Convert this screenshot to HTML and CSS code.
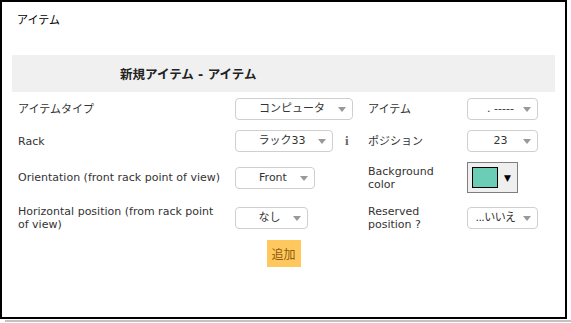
FILE: index.html
```html
<!DOCTYPE html>
<html lang="ja">
<head>
    <meta charset="UTF-8">
    <meta name="viewport" content="width=device-width, initial-scale=1.0">
    <title>アイテム</title>
    <link rel="stylesheet" href="styles.css">
</head>
<body>

    <div class="shot">
        <div class="frame">
            <h1 class="page-title">アイテム</h1>

            <div class="band">
                <h2 class="band-title">新規アイテム - アイテム</h2>
            </div>

            <!-- New item form -->
            <div class="form-grid">
                <div class="label">アイテムタイプ</div>
                <div class="field">
                    <div class="dropdown w-118">コンピュータ<span class="caret"></span></div>
                </div>
                <div class="label">アイテム</div>
                <div class="field">
                    <div class="dropdown w-71">. -----<span class="caret"></span></div>
                </div>

                <div class="label">Rack</div>
                <div class="field">
                    <div class="dropdown w-98">ラック33<span class="caret"></span></div>
                    <span class="info">i</span>
                </div>
                <div class="label">ポジション</div>
                <div class="field">
                    <div class="dropdown w-71">23<span class="caret"></span></div>
                </div>

                <div class="label">Orientation (front rack point of view)</div>
                <div class="field">
                    <div class="dropdown w-80">Front<span class="caret"></span></div>
                </div>
                <div class="label label-narrow">Background color</div>
                <div class="field">
                    <div class="color-picker">
                        <span class="swatch"></span>
                        <span class="picker-arrow">▼</span>
                    </div>
                </div>

                <div class="label">Horizontal position (from rack point of view)</div>
                <div class="field">
                    <div class="dropdown w-73">なし<span class="caret"></span></div>
                </div>
                <div class="label label-narrow">Reserved position ?</div>
                <div class="field">
                    <div class="dropdown w-71 tight">...いいえ<span class="caret"></span></div>
                </div>
            </div>

            <div class="actions">
                <button class="btn-add" type="submit">追加</button>
            </div>
        </div>
        <div class="shade"></div>
    </div>

</body>
</html>
```

FILE: styles.css
```css
/* General Styles */
body {
    margin: 0;
    background: #fff;
    font-family: "DejaVu Sans", "Noto Sans CJK JP", sans-serif;
    font-size: 11px;
    color: #333;
}

.shot {
    width: 571px;
}

.frame {
    width: 567px;
    height: 319px;
    box-sizing: border-box;
    border: 2px solid #000;
    background: #fff;
}

.shade {
    height: 2px;
    margin: 1px 0 0 5px;
    background: #c2c2c2;
}

.page-title {
    margin: 0;
    padding: 12px 0 0 15px;
    font-size: 11px;
    font-weight: normal;
    line-height: 14px;
    color: #000;
}

/* Header band */
.band {
    margin: 27px 10px 0;
    height: 37px;
    background: #f0f0f0;
    display: flex;
    align-items: center;
}

.band-title {
    margin: 0;
    padding-left: 108px;
    font-size: 12.5px;
    font-weight: bold;
    color: #222;
}

/* Form layout */
.form-grid {
    display: grid;
    grid-template-columns: 217px 133px 99px 1fr;
    grid-template-rows: 22px 22px 31px 30px;
    row-gap: 10px;
    align-items: center;
    padding: 6px 16px 0;
}

.label {
    line-height: 13px;
    padding-right: 12px;
    color: #333;
}

.label-narrow {
    padding-right: 14px;
}

.field {
    display: flex;
    align-items: center;
}

.dropdown {
    position: relative;
    height: 22px;
    box-sizing: border-box;
    border: 1px solid #cfcfcf;
    border-radius: 4px;
    background: #fff;
    line-height: 20px;
    text-align: center;
    color: #333;
    padding-right: 4px;
    white-space: nowrap;
    overflow: hidden;
}

.tight {
    padding-right: 14px;
    letter-spacing: -0.6px;
}

.w-118 { width: 118px; }
.w-98 { width: 98px; }
.w-80 { width: 80px; }
.w-73 { width: 73px; }
.w-71 { width: 71px; }

.caret {
    position: absolute;
    right: 6px;
    top: 8px;
    width: 0;
    height: 0;
    border-left: 4px solid transparent;
    border-right: 4px solid transparent;
    border-top: 5px solid #999;
}

.info {
    margin-left: 12px;
    font-family: "Liberation Serif", serif;
    font-weight: bold;
    font-size: 13px;
    color: #666;
}

/* Colour picker */
.color-picker {
    width: 51px;
    height: 31px;
    box-sizing: border-box;
    border: 1px solid #7e7e7e;
    background: #efefef;
    display: flex;
    align-items: center;
    padding-left: 4px;
}

.swatch {
    width: 26px;
    height: 21px;
    box-sizing: border-box;
    border: 1px solid #000;
    background: #6ccdb6;
}

.picker-arrow {
    margin-left: 6px;
    font-size: 9px;
    color: #000;
}

/* Submit */
.actions {
    display: flex;
    justify-content: center;
    padding-top: 7px;
}

.btn-add {
    width: 34px;
    height: 27px;
    padding: 0;
    border: none;
    background: #fec85e;
    color: #8e5a0c;
    font-family: "Noto Sans CJK JP", sans-serif;
    font-size: 12px;
    cursor: pointer;
}
```
